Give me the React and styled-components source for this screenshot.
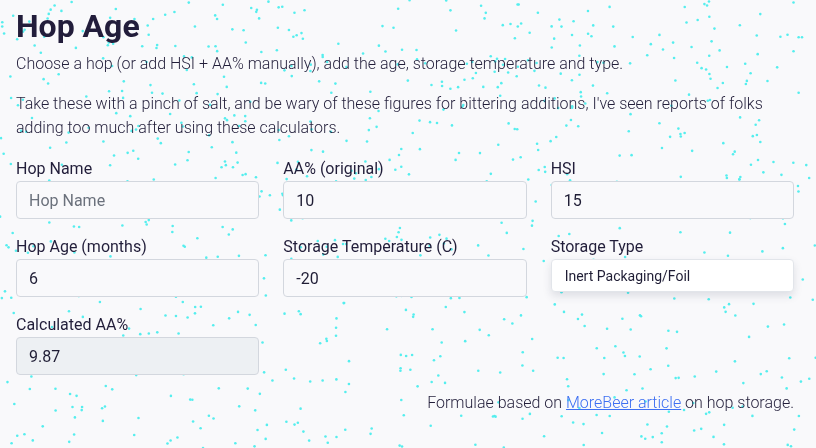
import React from "react";
import styled, { createGlobalStyle } from "styled-components";

const Global = createGlobalStyle`
  html, body { margin: 0; padding: 0; background: #f9f9fb; }
  body { font-family: Roboto, "Noto Sans", sans-serif; color: #221e3a; }
  * { box-sizing: border-box; }
`;

const Particles = styled.svg`
  position: fixed;
  inset: 0;
  width: 816px;
  height: 448px;
  z-index: 0;
  pointer-events: none;
`;

const Page = styled.main`
  position: relative;
  z-index: 1;
  width: 816px;
  padding: 7px 22px 0 16px;
`;

const Title = styled.h1`
  margin: 0;
  font-size: 32px;
  line-height: 38px;
  font-weight: 700;
  color: #221d3b;
`;

const Text = styled.p`
  margin: ${(p) => p.$top}px 0 0;
  font-size: 16px;
  line-height: 24px;
  font-weight: 300;
  color: #221e3a;
`;

const Grid = styled.div`
  display: grid;
  grid-template-columns: repeat(3, 1fr);
  column-gap: 24px;
  row-gap: 16px;
  margin-top: 17px;
`;

const Field = styled.label`
  display: flex;
  flex-direction: column;
`;

const Label = styled.span`
  font-size: 16px;
  line-height: 24px;
  font-weight: 400;
  color: #221e3a;
`;

const Input = styled.input`
  height: 38px;
  width: 100%;
  padding: 0 12px;
  border: 1px solid #d3d7de;
  border-radius: 4px;
  background: ${(p) => (p.disabled ? "#edf0f3" : "#f9f9fb")};
  font-family: Roboto, sans-serif;
  font-size: 16px;
  color: #1f1d35;
  outline: none;
  &::placeholder { color: #6b717c; }
`;

const Select = styled.div`
  height: 33px;
  display: flex;
  align-items: center;
  padding: 0 13px;
  background: #fff;
  border: 1px solid #e2e5ea;
  border-radius: 4px;
  box-shadow: 0 4px 8px rgba(40, 45, 80, 0.13);
  font-size: 14px;
  color: #1f1d35;
`;

const Footer = styled.p`
  margin: 16px 0 0;
  text-align: right;
  font-size: 16px;
  line-height: 24px;
  font-weight: 300;
  color: #221e3a;
`;

const Link = styled.a`
  color: #3d6ff2;
  text-decoration: underline;
`;

function mulberry32(a) {
  return function () {
    a |= 0;
    a = (a + 0x6d2b79f5) | 0;
    let t = Math.imul(a ^ (a >>> 15), 1 | a);
    t = (t + Math.imul(t ^ (t >>> 7), 61 | t)) ^ t;
    return ((t ^ (t >>> 14)) >>> 0) / 4294967296;
  };
}

const rand = mulberry32(1337);
const dots = Array.from({ length: 900 }, () => ({
  x: rand() * 816,
  y: rand() * 448,
}));

export default function App() {
  return (
    <>
      <Global />
      <Particles viewBox="0 0 816 448" aria-hidden="true">
        {dots.map((d, i) => (
          <circle key={i} cx={d.x} cy={d.y} r="1.3" fill="#55eeee" />
        ))}
      </Particles>
      <Page>
        <Title>Hop Age</Title>
        <Text $top={7}>
          Choose a hop (or add HSI + AA% manually), add the age, storage temperature and type.
        </Text>
        <Text $top={16}>
          Take these with a pinch of salt, and be wary of these figures for bittering additions, I've seen reports of folks adding too much after using these calculators.
        </Text>
        <Grid>
          <Field>
            <Label>Hop Name</Label>
            <Input placeholder="Hop Name" />
          </Field>
          <Field>
            <Label>AA% (original)</Label>
            <Input defaultValue="10" />
          </Field>
          <Field>
            <Label>HSI</Label>
            <Input defaultValue="15" />
          </Field>
          <Field>
            <Label>Hop Age (months)</Label>
            <Input defaultValue="6" />
          </Field>
          <Field>
            <Label>Storage Temperature (C)</Label>
            <Input defaultValue="-20" />
          </Field>
          <Field as="div">
            <Label>Storage Type</Label>
            <Select>Inert Packaging/Foil</Select>
          </Field>
          <Field>
            <Label>Calculated AA%</Label>
            <Input value="9.87" disabled readOnly />
          </Field>
        </Grid>
        <Footer>
          Formulae based on <Link href="#">MoreBeer article</Link> on hop storage.
        </Footer>
      </Page>
    </>
  );
}
